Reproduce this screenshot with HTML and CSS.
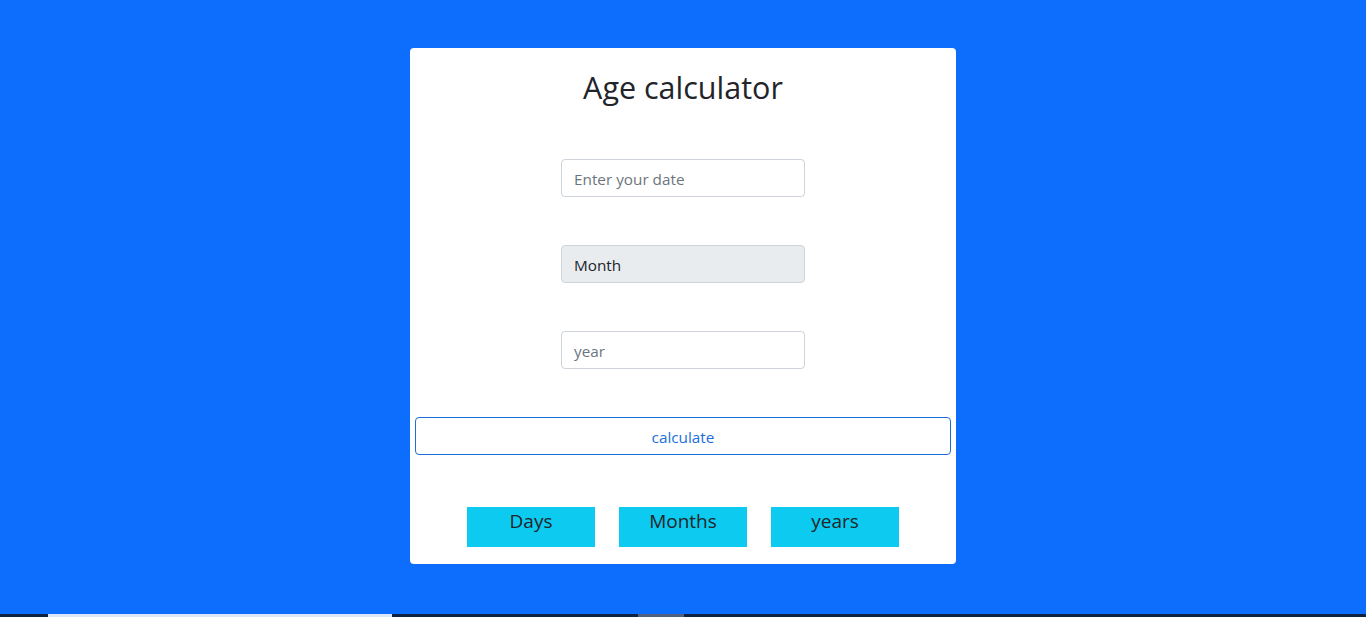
FILE: index.html
```html
<!DOCTYPE html>
<html lang="en">
<head>
<meta charset="utf-8">
<title>Age calculator</title>
<link rel="stylesheet" href="styles.css">
</head>
<body>
<main class="page">
  <section class="card">
    <h2 class="title">Age calculator</h2>
    <div class="fields">
      <input class="field" type="text" placeholder="Enter your date">
      <input class="field field-disabled" type="text" value="Month" disabled>
      <input class="field" type="text" placeholder="year">
    </div>
    <button class="btn-calc" type="button">calculate</button>
    <div class="results">
      <div class="result">Days</div>
      <div class="result">Months</div>
      <div class="result">years</div>
    </div>
  </section>
</main>
<footer class="taskbar">
  <span class="tb-dark tb-a"></span>
  <span class="tb-light"></span>
  <span class="tb-dark tb-b"></span>
  <span class="tb-gray"></span>
  <span class="tb-dark tb-c"></span>
</footer>
</body>
</html>
```
FILE: styles.css
```css
* { box-sizing: border-box; }
html, body { height: 100%; }
body {
  margin: 0;
  background: #0d6efd;
  font-family: "Open Sans", "Noto Sans", "Liberation Sans", sans-serif;
  color: #212529;
  display: flex;
  flex-direction: column;
}
.page {
  flex: 1;
  padding-top: 48px;
}
.card {
  width: 546px;
  margin: 0 auto;
  background: #fff;
  border-radius: 4px;
  padding: 0 5px 17px;
  display: flex;
  flex-direction: column;
  align-items: center;
}
.title {
  margin: 20px 0 0;
  font-size: 30.5px;
  font-weight: 400;
  line-height: 38px;
  text-align: center;
  color: #212529;
}
.fields {
  margin-top: 53px;
  display: flex;
  flex-direction: column;
  gap: 48px;
}
.field {
  width: 244px;
  height: 38px;
  padding: 7px 12px 5px;
  font-family: inherit;
  font-size: 15.3px;
  line-height: 24px;
  color: #212529;
  background: #fff;
  border: 1px solid #ced4da;
  border-radius: 4px;
  outline: none;
}
.field::placeholder { color: #6c757d; opacity: 1; }
.field-disabled {
  background: #e9ecef;
  color: #212529;
  -webkit-text-fill-color: #212529;
  opacity: 1;
}
.btn-calc {
  margin-top: 48px;
  width: 536px;
  height: 38px;
  padding: 1px 0 0;
  font-family: inherit;
  font-size: 15.3px;
  color: #1a6fd8;
  background: #fff;
  border: 1px solid #1a6fd8;
  border-radius: 4px;
  cursor: pointer;
}
.results {
  margin-top: 52px;
  display: flex;
  gap: 24px;
}
.result {
  width: 128px;
  height: 40px;
  background: #0dcaf0;
  font-size: 19px;
  line-height: 29px;
  text-align: center;
  color: #212529;
}
.taskbar {
  height: 3px;
  display: flex;
  flex-shrink: 0;
}
.taskbar span { display: block; height: 100%; }
.tb-dark { background: #0f2444; }
.tb-a { width: 48px; }
.tb-light { width: 344px; background: #dbe6f7; }
.tb-b { width: 246px; }
.tb-gray { width: 46px; background: #50627f; }
.tb-c { flex: 1; }
```
